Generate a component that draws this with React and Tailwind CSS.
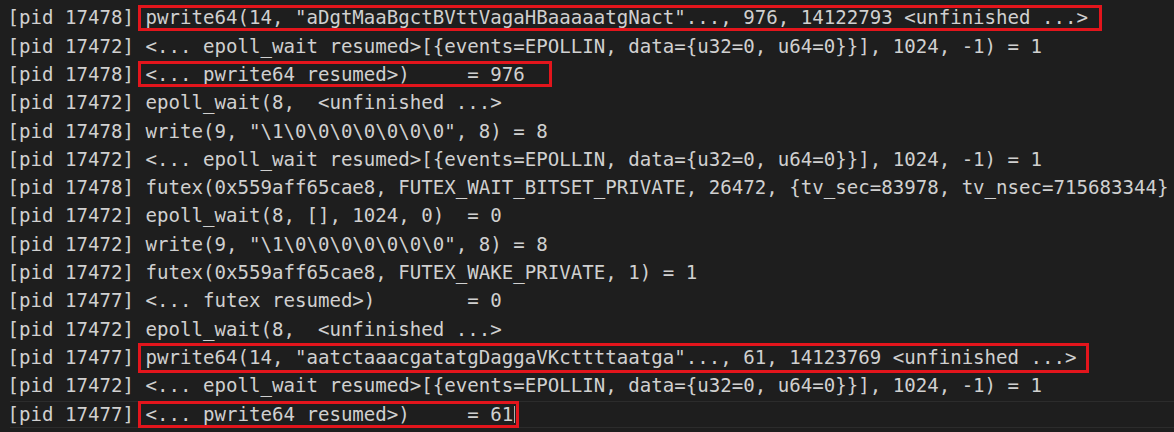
const lines = [
  { pid: "17478", text: 'pwrite64(14, "aDgtMaaBgctBVttVagaHBaaaaatgNact"..., 976, 14122793 <unfinished ...>', box: "-right-[14px] -top-[1.5px] -bottom-[1.5px]" },
  { pid: "17472", text: "<... epoll_wait resumed>[{events=EPOLLIN, data={u32=0, u64=0}}], 1024, -1) = 1" },
  { pid: "17478", text: "<... pwrite64 resumed>)     = 976", box: "-right-[27px] -top-[1.5px] -bottom-[1.5px]" },
  { pid: "17472", text: "epoll_wait(8,  <unfinished ...>" },
  { pid: "17478", text: 'write(9, "\\1\\0\\0\\0\\0\\0\\0\\0", 8) = 8' },
  { pid: "17472", text: "<... epoll_wait resumed>[{events=EPOLLIN, data={u32=0, u64=0}}], 1024, -1) = 1" },
  { pid: "17478", text: "futex(0x559aff65cae8, FUTEX_WAIT_BITSET_PRIVATE, 26472, {tv_sec=83978, tv_nsec=715683344}" },
  { pid: "17472", text: "epoll_wait(8, [], 1024, 0)  = 0" },
  { pid: "17472", text: 'write(9, "\\1\\0\\0\\0\\0\\0\\0\\0", 8) = 8' },
  { pid: "17472", text: "futex(0x559aff65cae8, FUTEX_WAKE_PRIVATE, 1) = 1" },
  { pid: "17477", text: "<... futex resumed>)        = 0" },
  { pid: "17472", text: "epoll_wait(8,  <unfinished ...>" },
  { pid: "17477", text: 'pwrite64(14, "aatctaaacgatatgDaggaVKcttttaatga"..., 61, 14123769 <unfinished ...>', box: "-right-[12px] -top-[3px] -bottom-[4px]" },
  { pid: "17472", text: "<... epoll_wait resumed>[{events=EPOLLIN, data={u32=0, u64=0}}], 1024, -1) = 1" },
  { pid: "17477", text: "<... pwrite64 resumed>)     = 61", box: "-right-[6px] -top-[1.5px] -bottom-[2px]", current: true },
];

function Line({ pid, text, box, current }) {
  return (
    <div className="relative h-[28.3px] whitespace-pre">
      {current && (
        <div className="absolute left-[2px] right-0 top-0 bottom-[1px] border-y border-[#2c2c2c]" />
      )}
      <span className="relative">{`[pid ${pid}] `}</span>
      <span className="relative">
        {text}
        {box && (
          <span
            className={`absolute -left-[7.5px] ${box} border-[3px] border-[#e3151c] pointer-events-none`}
          />
        )}
        {current && (
          <span className="absolute right-[-2px] top-[3px] bottom-[3px] w-[1.5px] bg-[#aeafad]" />
        )}
      </span>
    </div>
  );
}

export default function App() {
  return (
    <div className="w-[1174px] h-[432px] overflow-hidden bg-[#1e1e1e] pt-[4.35px] pl-[7.5px] font-['DejaVu_Sans_Mono','Liberation_Mono',monospace] text-[19.1px] leading-[28.3px] text-[#d0d0d0]">
      {lines.map((l, i) => (
        <Line key={i} {...l} />
      ))}
    </div>
  );
}
